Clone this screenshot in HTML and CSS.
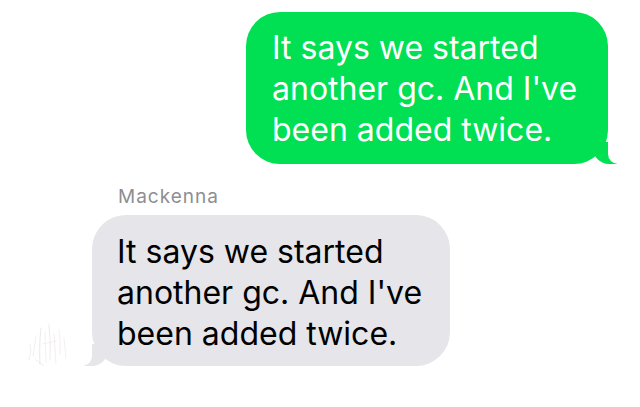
FILE: index.html
```html
<!DOCTYPE html>
<html lang="en">
<head>
    <meta charset="UTF-8">
    <meta name="viewport" content="width=device-width, initial-scale=1.0">
    <title>Messages</title>
    <link rel="stylesheet" href="styles.css">
</head>
<body>
    <div class="thread">
        <div class="bubble sent">It says we started another gc. And I've been added twice.</div>

        <div class="received">
            <!-- faded contact photo -->
            <svg class="avatar" width="52" height="52" viewBox="0 0 52 52">
                <g fill="none" stroke-width="0.7" stroke-linecap="round">
                    <path d="M6 30 Q8 38 5 46" stroke="#efe8e8"/>
                    <path d="M12 22 L9 42" stroke="#ece8ea"/>
                    <path d="M17 14 Q15 30 16 50" stroke="#eadcdc"/>
                    <path d="M21 18 L22 48" stroke="#efe9e9"/>
                    <path d="M25 10 Q27 28 26 46" stroke="#e8e2e4"/>
                    <path d="M30 20 L32 50" stroke="#efe7e7"/>
                    <path d="M35 16 Q37 30 36 40" stroke="#ece8ea"/>
                    <path d="M40 24 L42 44" stroke="#f0eaea"/>
                    <path d="M18 30 L32 27" stroke="#f0eaea"/>
                    <path d="M12 46 L20 52" stroke="#eee4e4"/>
                </g>
            </svg>
            <div class="received-body">
                <div class="sender">Mackenna</div>
                <div class="bubble incoming">It says we started another gc. And I've been added twice.</div>
            </div>
        </div>
    </div>
</body>
</html>
```

FILE: styles.css
```css
body {
    margin: 0;
    background: #fff;
    font-family: "Inter", "Liberation Sans", sans-serif;
}
.thread {
    display: flex;
    flex-direction: column;
    padding: 12px 32px 0 0;
}
.bubble {
    position: relative;
    box-sizing: border-box;
    border-radius: 34px;
    padding: 15px 20px 14px 26px;
    font-size: 32px;
    line-height: 41px;
}
.sent {
    align-self: flex-end;
    width: 362px;
    background: #00e052;
    color: #fff;
}
.sent::before {
    content: "";
    position: absolute;
    bottom: 0;
    right: -9px;
    width: 24px;
    height: 22px;
    background: #00e052;
    border-bottom-left-radius: 16px;
}
.sent::after {
    content: "";
    position: absolute;
    bottom: 0;
    right: -12px;
    width: 12px;
    height: 22px;
    background: #fff;
    border-bottom-left-radius: 10px;
}
.received {
    display: flex;
    align-items: flex-end;
    padding-left: 24px;
    margin-top: 22px;
}
.avatar {
    margin-right: 16px;
}
.received-body {
    display: flex;
    flex-direction: column;
}
.sender {
    padding-left: 26px;
    margin-bottom: 7px;
    font-size: 19px;
    line-height: 22px;
    color: #8e8e93;
    letter-spacing: 1px;
}
.incoming {
    width: 358px;
    padding: 16px 20px 12px 25px;
    background: #e5e5ea;
    color: #000;
}
.incoming::before {
    content: "";
    position: absolute;
    bottom: 0;
    left: -8px;
    width: 24px;
    height: 22px;
    background: #e5e5ea;
    border-bottom-right-radius: 16px;
}
.incoming::after {
    content: "";
    position: absolute;
    bottom: 0;
    left: -12px;
    width: 12px;
    height: 22px;
    background: #fff;
    border-bottom-right-radius: 10px;
}
```
